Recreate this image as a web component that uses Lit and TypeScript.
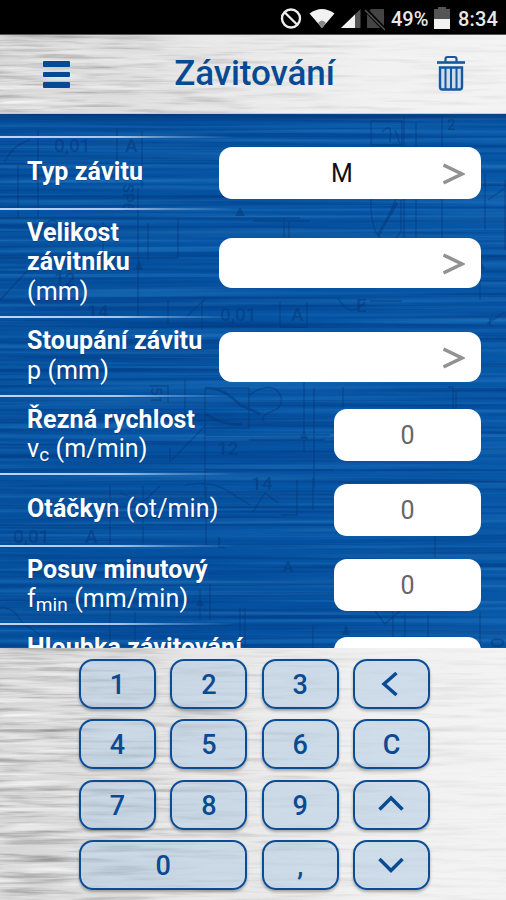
import { LitElement, html, css, nothing } from "lit";
import { customElement, property } from "lit/decorators.js";

@customElement("brushed-surface")
class BrushedSurface extends LitElement {
  @property() tone = "metal";

  static styles = css`
    :host { position: absolute; inset: 0; overflow: hidden; display: block; }
    svg { position: absolute; inset: 0; width: 100%; height: 100%; display: block; }
    .metal { background: linear-gradient(90deg, #d6d6d6 0, #dedede 25%, #e9e9e9 50%, #f1f1f1 75%, #f3f3f3 100%); }
    .metal .fine { -webkit-mask-image: linear-gradient(90deg, #000, rgba(0,0,0,.55) 35%, rgba(0,0,0,.25) 70%, rgba(0,0,0,.18)); }
    .blue { background: linear-gradient(180deg, rgba(0,45,115,.6) 0, rgba(0,45,115,0) 9px), linear-gradient(90deg, #04509e, #0553a3 60%, #0757a7); }
    .metal, .blue { position: absolute; inset: 0; }
  `;

  render() {
    const metal = this.tone === "metal";
    return html`<div class=${metal ? "metal" : "blue"}>
      <svg class="fine" aria-hidden="true">
        <filter id="dark" x="0" y="0" width="100%" height="100%" color-interpolation-filters="sRGB">
          <feTurbulence type="fractalNoise" baseFrequency=${metal ? "0.012 0.2" : "0.0025 0.2"} numOctaves="3" seed="8" />
          <feColorMatrix values=${metal ? "0 0 0 0 .3  0 0 0 0 .3  0 0 0 0 .3  1.3 0 0 0 -.6" : "0 0 0 0 0  0 0 0 0 .2  0 0 0 0 .48  1.5 0 0 0 -.65"} />
        </filter>
        <filter id="light" x="0" y="0" width="100%" height="100%" color-interpolation-filters="sRGB">
          <feTurbulence type="fractalNoise" baseFrequency=${metal ? "0.012 0.2" : "0.0025 0.2"} numOctaves="3" seed="21" />
          <feColorMatrix values=${metal ? "0 0 0 0 1  0 0 0 0 1  0 0 0 0 1  0 1.6 0 0 -.65" : "0 0 0 0 .16  0 0 0 0 .5  0 0 0 0 .78  0 1.3 0 0 -.56"} />
        </filter>
        <rect width="100%" height="100%" filter="url(#dark)" />
        <rect width="100%" height="100%" filter="url(#light)" />
      </svg>
    </div>`;
  }
}

@customElement("blueprint-art")
class BlueprintArt extends LitElement {
  static styles = css`
    :host { position: absolute; inset: 0; display: block; }
    svg { display: block; opacity: .46; }
    .l { fill: none; stroke: #07336f; stroke-width: 1.3; }
    .d { fill: none; stroke: #07336f; stroke-width: 2.6; }
    .f { fill: #07336f; }
    text { font: 500 19px Roboto, sans-serif; fill: #07336f; }
    .s { font-size: 15px; }
  `;

  render() {
    return html`<svg width="506" height="535" viewBox="0 114 506 535" aria-hidden="true">
      <path class="l" d="M18 164V218M38 130V218M0 164H38M117 128V164M142 131V188M138 188V318M0 218H300M148 223V260M178 218V258M103 222V258M0 258H178M0 300L28 270M5 162Q12 145 30 140M40 235Q52 205 65 235M253 221H310M284 217V240M289 221V240" />
      <path class="l" d="M371 121H402V145H371ZM404 115V240M416 122V240M442 115V240M371 199C369 240 389 253 401 231V200M396 199L379 236M382 132Q393 120 390 142M395 130L400 144" />
      <path class="l" d="M485 173V230M505 180V250M488 200L505 188M480 260V300M370 301H402M280 302V327M307 302V327H280M338 298Q350 320 365 302M168 300V325M185 318L205 299M202 302V330M487 324L505 312" />
      <path class="d" d="M378 235L397 203M205 388Q223 387 240 405L260 414M205 414Q224 426 242 424" />
      <path class="l" d="M205 388V500M205 388H249V428H205M249 395Q274 379 281 397C285 416 257 409 264 422M304 380V452M314 388V488M343 387V409M448 387H453V409M456 390V409M172 460L206 425M205 435H330M170 448V462M185 380V420M150 386H168V403M249 440H325M205 470H334" />
      <path class="l" d="M110 486V545M120 493L143 502L160 486M143 486V545M185 485Q209 480 226 490L250 505M253 512L265 493L278 503M297 480V515H281M313 478V510M0 525H334M206 487V545M435 536V557M200 590V620M210 584V620M0 608Q12 605 22 622L40 635M110 606V648M135 612V648M240 608V648M245 608V648M375 611L385 624L400 611M393 612V648M428 615V648M480 612V648M313 625V648M405 615V645" />
      <path class="f" d="M240 207l5 9h-10zM304 430l4 9h-8zM346 625l4 10h-8zM481 260l4 9h-8zM200 598l4 8h-8zM139 260l4 10h-8z" />
      <text x="54" y="152">0,01</text><text x="125" y="152">A</text>
      <text x="220" y="321">0,01</text><text x="291" y="321">A</text>
      <text x="87" y="318">14</text><text x="54" y="286">12</text>
      <text x="217" y="455">12</text><text x="251" y="490">14</text>
      <text x="13" y="543">0,01</text><text x="85" y="543">A</text>
      <text class="s" transform="translate(123 184) rotate(90)">SP6</text>
      <text class="s" transform="translate(151 387) rotate(90)">51</text>
      <text x="356" y="312">E</text><text class="s" x="447" y="130">2</text>
      <text x="217" y="548" class="s">L</text><text x="283" y="572" class="s">A</text>
      <text x="488" y="326" class="s">r</text><text transform="translate(504 648) rotate(-90)">0</text>
    </svg>`;
  }
}

interface Row { label: string; brk: boolean; base: string; sub: string; unit: string; kind: string; value: string; size: string; }

const rows: Row[] = [
  { label: "Typ závitu", brk: false, base: "", sub: "", unit: "", kind: "select", value: "M", size: "r72" },
  { label: "Velikost závitníku", brk: true, base: "", sub: "", unit: "(mm)", kind: "select", value: "", size: "r108" },
  { label: "Stoupání závitu", brk: true, base: "p", sub: "", unit: " (mm)", kind: "select", value: "", size: "r79" },
  { label: "Řezná rychlost", brk: true, base: "v", sub: "c", unit: " (m/min)", kind: "input", value: "0", size: "r78" },
  { label: "Otáčky", brk: false, base: "n", sub: "", unit: " (ot/min)", kind: "input", value: "0", size: "r72" },
  { label: "Posuv minutový", brk: true, base: "f", sub: "min", unit: " (mm/min)", kind: "input", value: "0", size: "r78" },
  { label: "Hloubka závitování", brk: true, base: "\u00a0", sub: "", unit: "", kind: "input", value: "", size: "r78" },
];

const keys = ["1", "2", "3", "left", "4", "5", "6", "C", "7", "8", "9", "up", "0", ",", "down"];

const arrows: Record<string, string> = {
  left: "M19.500 3L7 14L19.500 25",
  up: "M2.500 18.500L14 7L25.500 18.500",
  down: "M2.500 8L14 19.500L25.500 8",
};

@customElement("app-root")
class AppRoot extends LitElement {
  static styles = css`
    :host { display: flex; flex-direction: column; width: 506px; height: 900px; overflow: hidden; font-family: Roboto, sans-serif; }
    * { box-sizing: border-box; }
    .status { flex: none; height: 35px; background: #000; color: #e8e8e8; display: flex; align-items: center; justify-content: flex-end; padding: 3px 8px 0 0; font-size: 20px; font-weight: 500; border-bottom: 1px solid #555; }
    .status svg { display: block; flex: none; }
    .status .pct { width: 38px; margin: 0 5px 0 6px; white-space: nowrap; }
    .status .clock { width: 40px; margin-left: 8px; white-space: nowrap; letter-spacing: .2px; }
    header { flex: none; position: relative; height: 79px; display: flex; align-items: center; justify-content: space-between; padding: 0 40px 2px 43px; border-bottom: 1px solid #bccbdd; color: #074a94; }
    header > * { position: relative; }
    header brushed-surface { position: absolute; }
    h1 { margin: 2px 0 0; font-size: 35px; line-height: 40px; font-weight: 500; padding-left: 3px; letter-spacing: -.1px; }
    .menu { width: 27px; display: flex; flex-direction: column; gap: 5px; padding-top: 3px; }
    .menu i { height: 5.500px; background: #074a94; border-radius: 1px; }
    header svg { display: block; }
    main { flex: none; position: relative; height: 534px; overflow: hidden; padding-top: 22px; }
    .row { position: relative; display: flex; align-items: center; justify-content: space-between; padding: 2px 25px 0 27px; }
    .row::before { content: ""; position: absolute; top: 0; left: 0; width: 235px; height: 2px; background: linear-gradient(90deg, #c3d5ee, #abc6e8 50%, rgba(140,180,225,.55) 72%, rgba(140,180,225,0)); }
    .r72 { height: 72px; } .r108 { height: 108px; } .r79 { height: 79px; } .r78 { height: 78px; }
    .label { color: #fff; font-size: 25px; line-height: 29.500px; font-weight: 400; letter-spacing: .1px; margin-top: -2px; white-space: nowrap; text-shadow: 0 1px 1px rgba(0,30,80,.35); }
    .label b { font-weight: 700; }
    .label.wrap { width: 150px; white-space: normal; }
    .sub { font-size: 19px; line-height: 0; position: relative; top: 4px; }
    .field { flex: none; background: #fff; border-radius: 13px; height: 52px; display: flex; align-items: center; justify-content: center; font-size: 25px; color: #666; }
    .input { width: 147px; }
    .select { width: 262px; height: 50px; color: #111; position: relative; padding-right: 16px; }
    .select.tall { height: 52px; }
    .select svg { position: absolute; right: 16px; top: calc(50% - 10px); }
    .pad { flex: 1; position: relative; padding: 11px 0 0 79px; }
    .keys { position: relative; width: 351px; display: grid; grid-template-columns: repeat(4, 77px); column-gap: 14.330px; row-gap: 10.300px; grid-auto-rows: 50px; }
    .key { display: flex; align-items: center; justify-content: center; padding: 2px 0 0; margin: 0; border: 2.500px solid #0a4d96; border-radius: 14px; background: rgba(178,204,230,.55); box-shadow: 0 2px 3px rgba(0,0,0,.3); color: #0a4a93; font: 500 27px/30px Roboto, sans-serif; }
    .key.wide { grid-column: span 2; }
  `;

  renderKey(k: string) {
    return html`<button class="key ${k === "0" ? "wide" : ""}" aria-label=${k}>
      ${arrows[k]
        ? html`<svg width="29" height="30" viewBox="0 0 29 30" fill="none" stroke="#0a4a93" stroke-width="3.500"><path d=${arrows[k]} /></svg>`
        : k}
    </button>`;
  }

  renderRow(r: Row, i: number) {
    return html`<div class="row ${r.size}">
      <div class="label ${i === 1 ? "wrap" : ""}"><b>${r.label}</b>${r.brk ? html`<br>` : nothing}${r.base}${r.sub ? html`<span class="sub">${r.sub}</span>` : nothing}${r.unit}</div>
      <div class="field ${r.kind} ${i === 0 ? "tall" : ""}">${r.value}${r.kind === "select"
        ? html`<svg width="22" height="22" viewBox="0 0 22 22" fill="none" stroke="#929292" stroke-width="3.600"><path d="M.5 2L19 11L.5 20" /></svg>`
        : nothing}</div>
    </div>`;
  }

  render() {
    return html`
      <div class="status">
        <svg width="105" height="26" viewBox="280 5 105 26">
          <circle cx="291" cy="17.500" r="9" fill="none" stroke="#eee" stroke-width="2.400" />
          <path d="M284.800 11.500L297 23.500" stroke="#eee" stroke-width="2.400" />
          <path d="M309.500 12.500Q322 3.500 334.500 12.500L322 27Z" fill="#f2f2f2" />
          <path d="M318 22Q322 17 326 22L322 27Z" fill="#888" />
          <path d="M360.500 8V27H341Z" fill="#555" />
          <path d="M355 13.500V27H341Z" fill="#f2f2f2" />
          <path d="M371 8H384V27H367V12Z" fill="#444" />
          <path d="M365 8L386 30" stroke="#000" stroke-width="4" />
          <path d="M365 9L385 29" stroke="#555" stroke-width="1.500" />
        </svg>
        <span class="pct">49%</span>
        <svg width="16" height="23" viewBox="0 0 16 23"><path d="M4 0H12V2H16V12H0V2H4Z" fill="#555" /><path d="M0 12H16V22H0Z" fill="#f2f2f2" /></svg>
        <span class="clock">8:34</span>
      </div>
      <header>
        <brushed-surface></brushed-surface>
        <div class="menu"><i></i><i></i><i></i></div>
        <h1>Závitování</h1>
        <svg width="30" height="36" viewBox="0 0 30 36" fill="none" stroke="#1558a0">
          <path d="M1 7.500H29" stroke-width="2.600" /><path d="M9.500 7V4Q9.500 2 11.500 2H18.500Q20.500 2 20.500 4V7" stroke-width="2.200" />
          <path d="M4 12.500H26V32Q26 34.500 23.500 34.500H6.500Q4 34.500 4 32Z" stroke-width="2.400" fill="#cfdbe8" />
          <path d="M9.500 13V34M15 13V34M20.500 13V34" stroke-width="2" />
        </svg>
      </header>
      <main>
        <brushed-surface tone="blue"></brushed-surface>
        <blueprint-art></blueprint-art>
        ${rows.map((r, i) => this.renderRow(r, i))}
      </main>
      <section class="pad">
        <brushed-surface></brushed-surface>
        <div class="keys">${keys.map((k) => this.renderKey(k))}</div>
      </section>`;
  }
}
